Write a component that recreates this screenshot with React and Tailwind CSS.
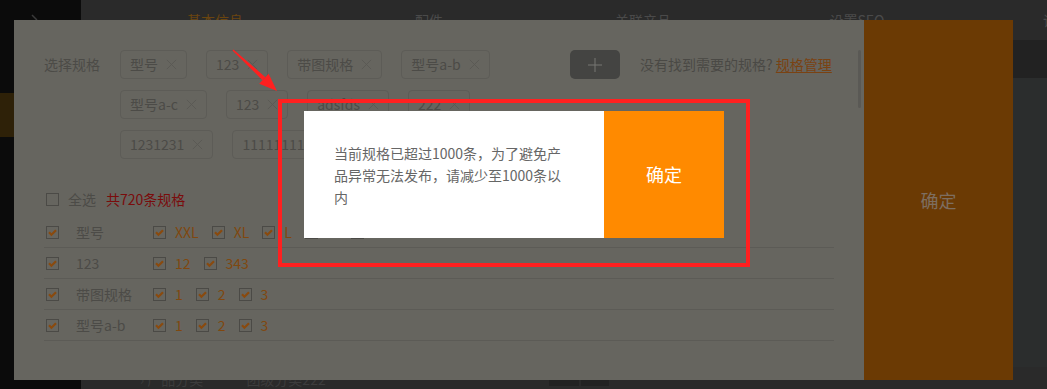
const tags = ["型号", "123", "带图规格", "型号a-b", "型号a-c", "123", "adsfds", "222", "1231231", "11111111111"];

const specs = [
  { name: "型号", values: ["XXL", "XL", "L", "M", "S"] },
  { name: "123", values: ["12", "343"] },
  { name: "带图规格", values: ["1", "2", "3"] },
  { name: "型号a-b", values: ["1", "2", "3"] },
];

const tabs = ["基本信息", "配件", "关联产品", "设置SEO", "详细描述"];

function CloseIcon({ size = 12, color = "#5a5954", width = 1 }) {
  return (
    <svg width={size} height={size} viewBox="0 0 12 12" className="shrink-0">
      <path d="M1 1L11 11M11 1L1 11" stroke={color} strokeWidth={width} fill="none" />
    </svg>
  );
}

function Check({ checked }) {
  return (
    <svg width="13" height="13" viewBox="0 0 13 13" className="shrink-0">
      <rect x="0.5" y="0.5" width="12" height="12" fill="none" stroke="#4b4a46" />
      {checked && (
        <path d="M3 6.3L5.4 8.7L10 4.2" fill="none" stroke="#8a4a0e" strokeWidth="2.2" />
      )}
    </svg>
  );
}

function Tag({ label }) {
  return (
    <div className="h-[29px] px-[9px] flex items-center gap-[8px] border border-[#5d5c57] rounded-[4px] text-[14px] text-[#4c4b47]">
      <span>{label}</span>
      <CloseIcon size={11} />
    </div>
  );
}

function BackgroundPage() {
  return (
    <div className="flex w-full h-full">
      {/* sidebar */}
      <div className="w-[81px] shrink-0 bg-[#0b0b0b] flex flex-col">
        <div className="h-[93px] relative">
          <svg width="8" height="8" viewBox="0 0 8 8" className="absolute left-[31px] top-[14px]">
            <path d="M1 1L6 6" stroke="#3a3a3a" strokeWidth="1.5" />
          </svg>
        </div>
        <div className="h-[44px] bg-[#2e2108]" />
      </div>

      {/* main */}
      <div className="flex-1 flex flex-col bg-[#2b2d2d]">
        <div className="h-[40px] bg-[#2a2a2a] flex pl-[27px] text-[14px] shrink-0">
          {tabs.map((t, i) => (
            <div
              key={t}
              className={`w-[214px] shrink-0 flex items-center justify-center ${i === 0 ? "text-[#6a4510]" : "text-[#4a4a4a]"}`}
            >
              {t}
            </div>
          ))}
        </div>
        <div className="h-[38px] bg-[#222222] flex justify-end items-center pr-[4px] shrink-0">
          <CloseIcon size={21} color="#6a6a6a" width={0.9} />
        </div>
        <div className="flex flex-col gap-[20px] pt-[83px]">
          {[0, 1].map((i) => (
            <div key={i} className="flex justify-end">
              <div className="h-[39px] bg-[#222222] px-[12px] mr-[-10px] flex items-center text-[14px] text-[#4a4a4a]">
                上传图片
              </div>
            </div>
          ))}
        </div>
        <div className="mt-auto h-[22px] bg-[#2a2a2a] flex items-start pl-[59px] text-[14px] text-[#3c3c3c] leading-[14px] pt-[5px] gap-[43px]">
          <span>› 产品分类</span>
          <span>团级分类222</span>
          <div className="ml-[180px] flex gap-[2px]">
            <div className="w-[30px] h-[14px] bg-[#222222]" />
            <div className="w-[28px] h-[14px] bg-[#222222]" />
          </div>
        </div>
      </div>
    </div>
  );
}

function SpecModal() {
  return (
    <div className="absolute left-[14px] top-[20px] w-[999px] h-[360px] flex">
      <div className="relative w-[850px] bg-[#66655f] pl-[30px] pr-[30px] pt-[30px] flex flex-col">
        <div className="flex items-start">
          <div className="w-[76px] h-[29px] flex items-center text-[14px] text-[#4c4b47]">选择规格</div>
          <div className="w-[450px] flex flex-wrap gap-x-[19px] gap-y-[11px]">
            {tags.map((t, i) => (
              <Tag key={i} label={t} />
            ))}
          </div>
          <button className="w-[50px] h-[29px] rounded-[5px] bg-[#444442] flex items-center justify-center">
            <svg width="14" height="14" viewBox="0 0 14 14">
              <path d="M7 0V14M0 7H14" stroke="#777672" strokeWidth="1" />
            </svg>
          </button>
          <div className="ml-[20px] h-[29px] flex items-center text-[14px] text-[#4a4945]">
            没有找到需要的规格?&nbsp;
            <span className="text-[#7a4212] underline underline-offset-2">规格管理</span>
          </div>
        </div>

        <div className="mt-[30px] h-[20px] flex items-center pl-[2px] text-[14px]">
          <Check checked={false} />
          <span className="ml-[9px] text-[#4c4b47]">全选</span>
          <span className="ml-[10px] text-[#7a0c0c]">共720条规格</span>
        </div>

        <div className="mt-[8px]">
          {specs.map((s) => (
            <div key={s.name} className="h-[31px] border-b border-[#5c5b56] flex items-center pl-[2px] text-[14px]">
              <Check checked />
              <span className="ml-[17px] w-[77px] text-[#4c4b47]">{s.name}</span>
              <div className="flex items-center gap-[13px]">
                {s.values.map((v) => (
                  <div key={v} className="flex items-center gap-[9px]">
                    <Check checked />
                    <span className="text-[#80480f]">{v}</span>
                  </div>
                ))}
              </div>
            </div>
          ))}
        </div>

        <div className="absolute right-[3px] top-[30px] w-[3px] h-[58px] rounded-full bg-[#5a5955]" />
      </div>
      <div className="w-[149px] bg-[#6b3a04] flex items-center justify-center text-[18px] text-[#7d6e60]">
        确定
      </div>
    </div>
  );
}

function AlertDialog() {
  return (
    <div className="absolute left-[304px] top-[111px] h-[127px] flex">
      <div className="w-[300px] bg-white px-[30px] flex items-center text-[14px] leading-[22px] text-[#666666]">
        当前规格已超过1000条，为了避免产品异常无法发布，请减少至1000条以内
      </div>
      <button className="w-[120px] bg-[#ff8a00] text-white text-[18px] flex items-center justify-center">
        确定
      </button>
    </div>
  );
}

export default function App() {
  return (
    <div className="relative w-[1047px] h-[389px] overflow-hidden bg-[#2a2a2a] font-['Noto_Sans_CJK_SC',sans-serif]">
      <BackgroundPage />
      <SpecModal />
      <AlertDialog />

      {/* annotation */}
      <div className="absolute left-[278px] top-[99px] w-[472px] h-[168px] border-[4px] border-[#ff2020]" />
      <svg
        className="absolute left-[228px] top-[45px]"
        width="55"
        height="52"
        viewBox="228 45 55 52"
      >
        <polygon points="233.4,49.5 232.5,50.5 262.5,80.3 265.4,77.2" fill="#ff2020" />
        <polygon points="277,91 259.2,83.8 268.6,73.7" fill="#ff2020" />
      </svg>
    </div>
  );
}
